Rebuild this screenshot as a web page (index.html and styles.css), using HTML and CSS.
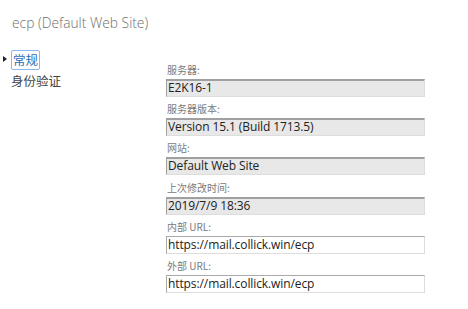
FILE: index.html
```html
<!DOCTYPE html>
<html lang="zh-CN">
<head>
  <meta charset="UTF-8" />
  <title>ecp (Default Web Site)</title>
  <link rel="stylesheet" href="styles.css">
</head>
<body>
  <h1 class="title">ecp (Default Web Site)</h1>

  <div class="main">
    <!-- left nav -->
    <ul class="nav">
      <li class="nav-item selected"><span class="arrow"></span><span class="focus">常规</span></li>
      <li class="nav-item">身份验证</li>
    </ul>

    <!-- properties -->
    <div class="form">
      <div class="field">
        <div class="label">服务器:</div>
        <div class="box readonly">E2K16-1</div>
      </div>
      <div class="field">
        <div class="label">服务器版本:</div>
        <div class="box readonly">Version 15.1 (Build 1713.5)</div>
      </div>
      <div class="field">
        <div class="label">网站:</div>
        <div class="box readonly">Default Web Site</div>
      </div>
      <div class="field">
        <div class="label">上次修改时间:</div>
        <div class="box readonly">2019/7/9 18:36</div>
      </div>
      <div class="field">
        <div class="label">内部 URL:</div>
        <div class="box">https://mail.collick.win/ecp</div>
      </div>
      <div class="field">
        <div class="label">外部 URL:</div>
        <div class="box">https://mail.collick.win/ecp</div>
      </div>
    </div>
  </div>
</body>
</html>
```

FILE: styles.css
```css
:root {
  --label: #7a7a7a;
  --text: #222;
}

body {
  margin: 0;
  background: white;
  font-family: "Open Sans", "Noto Sans CJK SC", sans-serif;
  color: var(--text);
}

.title {
  margin: 0;
  padding: 13px 0 0 12px;
  height: 37px;
  font-size: 13.8px;
  font-weight: 300;
  line-height: 20px;
  color: #6e6e6e;
}

.main {
  display: flex;
}

.nav {
  list-style: none;
  margin: 0;
  padding: 0;
  width: 166px;
  flex: none;
}
.nav-item {
  position: relative;
  padding-left: 11px;
  height: 22px;
  font-size: 12.5px;
  line-height: 18px;
  color: #444;
  font-family: "Noto Sans CJK SC", sans-serif;
}
.nav-item.selected { color: #2e6db5; }
.focus {
  display: inline-block;
  padding: 0 1px;
  border: 1px solid #8db6f0;
  border-radius: 2px;
}
.arrow {
  position: absolute;
  left: 3px;
  top: 6px;
  border-left: 4px solid #222;
  border-top: 3.5px solid transparent;
  border-bottom: 3.5px solid transparent;
}

.form {
  width: 259px;
  padding-top: 12px;
}
.field {
  height: 39.2px;
}
.label {
  font-size: 10px;
  line-height: 16px;
  height: 17px;
  padding-left: 1px;
  color: var(--label);
  font-family: "Noto Sans CJK SC", sans-serif;
}
.box {
  box-sizing: border-box;
  height: 18px;
  padding: 0 1px;
  font-size: 12px;
  line-height: 15px;
  letter-spacing: -0.1px;
  border: 1px solid #aaa;
  border-right-color: #ddd;
  border-bottom-color: #ddd;
  background: white;
}
.readonly {
  background: #e8e8e8;
  border-top: 2px solid #a0a0a0;
  border-left-color: #a0a0a0;
  line-height: 14px;
}
```
